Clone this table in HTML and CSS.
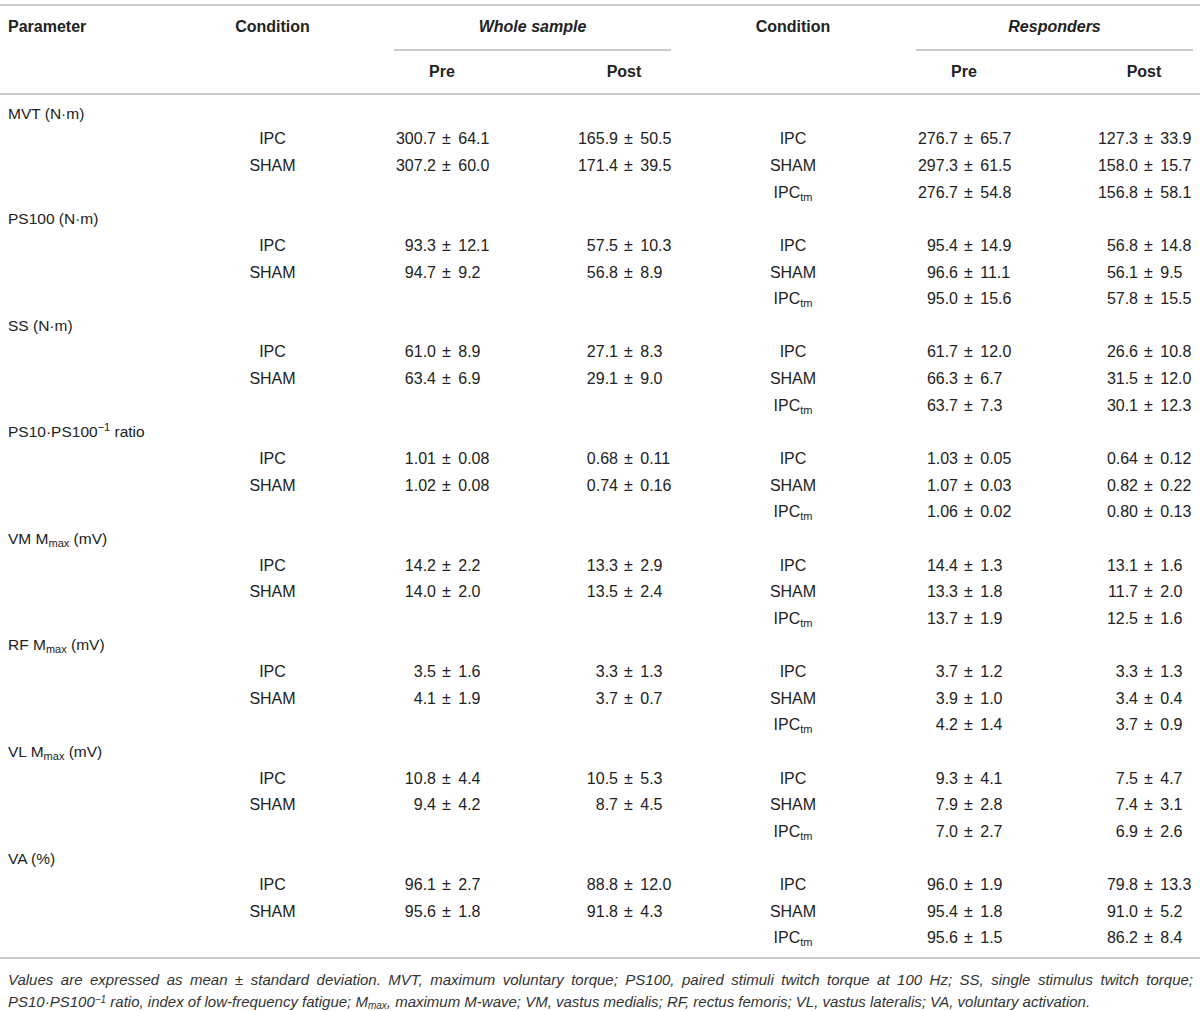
FILE: index.html
```html
<!DOCTYPE html>
<html lang="en">
<head>
  <meta charset="UTF-8" />
  <meta name="viewport" content="width=device-width, initial-scale=1.0" />
  <title>Table</title>
  <link rel="stylesheet" href="styles.css">
</head>
<body>
  <table class="data-table">
    <colgroup>
      <col class="c-param">
      <col class="c-cond">
      <col class="c-wpre">
      <col class="c-wpost">
      <col class="c-cond2">
      <col class="c-rpre">
      <col class="c-rpost">
    </colgroup>
    <thead>
      <tr class="head-1">
        <th class="param">Parameter</th>
        <th class="cond">Condition</th>
        <th colspan="2" class="span-w"><div class="spanner"><em>Whole sample</em></div></th>
        <th class="cond2">Condition</th>
        <th colspan="2" class="span-r"><div class="spanner"><em>Responders</em></div></th>
      </tr>
      <tr class="head-2">
        <th></th>
        <th></th>
        <th class="wpre"><span class="hd">Pre</span></th>
        <th class="wpost"><span class="hd">Post</span></th>
        <th></th>
        <th class="rpre"><span class="hd">Pre</span></th>
        <th class="rpost"><span class="hd">Post</span></th>
      </tr>
    </thead>
    <tbody>
      <tr class="group"><td class="param">MVT (N·m)</td><td colspan="6"></td></tr>
      <tr>
        <td></td><td class="cond">IPC</td>
        <td class="wpre"><span class="m">300.7</span><span class="s">± 64.1</span></td>
        <td class="wpost"><span class="m">165.9</span><span class="s">± 50.5</span></td>
        <td class="cond2">IPC</td>
        <td class="rpre"><span class="m">276.7</span><span class="s">± 65.7</span></td>
        <td class="rpost"><span class="m">127.3</span><span class="s">± 33.9</span></td>
      </tr>
      <tr>
        <td></td><td class="cond">SHAM</td>
        <td class="wpre"><span class="m">307.2</span><span class="s">± 60.0</span></td>
        <td class="wpost"><span class="m">171.4</span><span class="s">± 39.5</span></td>
        <td class="cond2">SHAM</td>
        <td class="rpre"><span class="m">297.3</span><span class="s">± 61.5</span></td>
        <td class="rpost"><span class="m">158.0</span><span class="s">± 15.7</span></td>
      </tr>
      <tr>
        <td></td><td></td><td></td><td></td>
        <td class="cond2">IPC<sub>tm</sub></td>
        <td class="rpre"><span class="m">276.7</span><span class="s">± 54.8</span></td>
        <td class="rpost"><span class="m">156.8</span><span class="s">± 58.1</span></td>
      </tr>

      <tr class="group"><td class="param">PS100 (N·m)</td><td colspan="6"></td></tr>
      <tr>
        <td></td><td class="cond">IPC</td>
        <td class="wpre"><span class="m">93.3</span><span class="s">± 12.1</span></td>
        <td class="wpost"><span class="m">57.5</span><span class="s">± 10.3</span></td>
        <td class="cond2">IPC</td>
        <td class="rpre"><span class="m">95.4</span><span class="s">± 14.9</span></td>
        <td class="rpost"><span class="m">56.8</span><span class="s">± 14.8</span></td>
      </tr>
      <tr>
        <td></td><td class="cond">SHAM</td>
        <td class="wpre"><span class="m">94.7</span><span class="s">± 9.2</span></td>
        <td class="wpost"><span class="m">56.8</span><span class="s">± 8.9</span></td>
        <td class="cond2">SHAM</td>
        <td class="rpre"><span class="m">96.6</span><span class="s">± 11.1</span></td>
        <td class="rpost"><span class="m">56.1</span><span class="s">± 9.5</span></td>
      </tr>
      <tr>
        <td></td><td></td><td></td><td></td>
        <td class="cond2">IPC<sub>tm</sub></td>
        <td class="rpre"><span class="m">95.0</span><span class="s">± 15.6</span></td>
        <td class="rpost"><span class="m">57.8</span><span class="s">± 15.5</span></td>
      </tr>

      <tr class="group"><td class="param">SS (N·m)</td><td colspan="6"></td></tr>
      <tr>
        <td></td><td class="cond">IPC</td>
        <td class="wpre"><span class="m">61.0</span><span class="s">± 8.9</span></td>
        <td class="wpost"><span class="m">27.1</span><span class="s">± 8.3</span></td>
        <td class="cond2">IPC</td>
        <td class="rpre"><span class="m">61.7</span><span class="s">± 12.0</span></td>
        <td class="rpost"><span class="m">26.6</span><span class="s">± 10.8</span></td>
      </tr>
      <tr>
        <td></td><td class="cond">SHAM</td>
        <td class="wpre"><span class="m">63.4</span><span class="s">± 6.9</span></td>
        <td class="wpost"><span class="m">29.1</span><span class="s">± 9.0</span></td>
        <td class="cond2">SHAM</td>
        <td class="rpre"><span class="m">66.3</span><span class="s">± 6.7</span></td>
        <td class="rpost"><span class="m">31.5</span><span class="s">± 12.0</span></td>
      </tr>
      <tr>
        <td></td><td></td><td></td><td></td>
        <td class="cond2">IPC<sub>tm</sub></td>
        <td class="rpre"><span class="m">63.7</span><span class="s">± 7.3</span></td>
        <td class="rpost"><span class="m">30.1</span><span class="s">± 12.3</span></td>
      </tr>

      <tr class="group"><td class="param" colspan="2">PS10·PS100<sup>−1</sup> ratio</td><td colspan="5"></td></tr>
      <tr>
        <td></td><td class="cond">IPC</td>
        <td class="wpre"><span class="m">1.01</span><span class="s">± 0.08</span></td>
        <td class="wpost"><span class="m">0.68</span><span class="s">± 0.11</span></td>
        <td class="cond2">IPC</td>
        <td class="rpre"><span class="m">1.03</span><span class="s">± 0.05</span></td>
        <td class="rpost"><span class="m">0.64</span><span class="s">± 0.12</span></td>
      </tr>
      <tr>
        <td></td><td class="cond">SHAM</td>
        <td class="wpre"><span class="m">1.02</span><span class="s">± 0.08</span></td>
        <td class="wpost"><span class="m">0.74</span><span class="s">± 0.16</span></td>
        <td class="cond2">SHAM</td>
        <td class="rpre"><span class="m">1.07</span><span class="s">± 0.03</span></td>
        <td class="rpost"><span class="m">0.82</span><span class="s">± 0.22</span></td>
      </tr>
      <tr>
        <td></td><td></td><td></td><td></td>
        <td class="cond2">IPC<sub>tm</sub></td>
        <td class="rpre"><span class="m">1.06</span><span class="s">± 0.02</span></td>
        <td class="rpost"><span class="m">0.80</span><span class="s">± 0.13</span></td>
      </tr>

      <tr class="group"><td class="param">VM M<sub>max</sub> (mV)</td><td colspan="6"></td></tr>
      <tr>
        <td></td><td class="cond">IPC</td>
        <td class="wpre"><span class="m">14.2</span><span class="s">± 2.2</span></td>
        <td class="wpost"><span class="m">13.3</span><span class="s">± 2.9</span></td>
        <td class="cond2">IPC</td>
        <td class="rpre"><span class="m">14.4</span><span class="s">± 1.3</span></td>
        <td class="rpost"><span class="m">13.1</span><span class="s">± 1.6</span></td>
      </tr>
      <tr>
        <td></td><td class="cond">SHAM</td>
        <td class="wpre"><span class="m">14.0</span><span class="s">± 2.0</span></td>
        <td class="wpost"><span class="m">13.5</span><span class="s">± 2.4</span></td>
        <td class="cond2">SHAM</td>
        <td class="rpre"><span class="m">13.3</span><span class="s">± 1.8</span></td>
        <td class="rpost"><span class="m">11.7</span><span class="s">± 2.0</span></td>
      </tr>
      <tr>
        <td></td><td></td><td></td><td></td>
        <td class="cond2">IPC<sub>tm</sub></td>
        <td class="rpre"><span class="m">13.7</span><span class="s">± 1.9</span></td>
        <td class="rpost"><span class="m">12.5</span><span class="s">± 1.6</span></td>
      </tr>

      <tr class="group"><td class="param">RF M<sub>max</sub> (mV)</td><td colspan="6"></td></tr>
      <tr>
        <td></td><td class="cond">IPC</td>
        <td class="wpre"><span class="m">3.5</span><span class="s">± 1.6</span></td>
        <td class="wpost"><span class="m">3.3</span><span class="s">± 1.3</span></td>
        <td class="cond2">IPC</td>
        <td class="rpre"><span class="m">3.7</span><span class="s">± 1.2</span></td>
        <td class="rpost"><span class="m">3.3</span><span class="s">± 1.3</span></td>
      </tr>
      <tr>
        <td></td><td class="cond">SHAM</td>
        <td class="wpre"><span class="m">4.1</span><span class="s">± 1.9</span></td>
        <td class="wpost"><span class="m">3.7</span><span class="s">± 0.7</span></td>
        <td class="cond2">SHAM</td>
        <td class="rpre"><span class="m">3.9</span><span class="s">± 1.0</span></td>
        <td class="rpost"><span class="m">3.4</span><span class="s">± 0.4</span></td>
      </tr>
      <tr>
        <td></td><td></td><td></td><td></td>
        <td class="cond2">IPC<sub>tm</sub></td>
        <td class="rpre"><span class="m">4.2</span><span class="s">± 1.4</span></td>
        <td class="rpost"><span class="m">3.7</span><span class="s">± 0.9</span></td>
      </tr>

      <tr class="group"><td class="param">VL M<sub>max</sub> (mV)</td><td colspan="6"></td></tr>
      <tr>
        <td></td><td class="cond">IPC</td>
        <td class="wpre"><span class="m">10.8</span><span class="s">± 4.4</span></td>
        <td class="wpost"><span class="m">10.5</span><span class="s">± 5.3</span></td>
        <td class="cond2">IPC</td>
        <td class="rpre"><span class="m">9.3</span><span class="s">± 4.1</span></td>
        <td class="rpost"><span class="m">7.5</span><span class="s">± 4.7</span></td>
      </tr>
      <tr>
        <td></td><td class="cond">SHAM</td>
        <td class="wpre"><span class="m">9.4</span><span class="s">± 4.2</span></td>
        <td class="wpost"><span class="m">8.7</span><span class="s">± 4.5</span></td>
        <td class="cond2">SHAM</td>
        <td class="rpre"><span class="m">7.9</span><span class="s">± 2.8</span></td>
        <td class="rpost"><span class="m">7.4</span><span class="s">± 3.1</span></td>
      </tr>
      <tr>
        <td></td><td></td><td></td><td></td>
        <td class="cond2">IPC<sub>tm</sub></td>
        <td class="rpre"><span class="m">7.0</span><span class="s">± 2.7</span></td>
        <td class="rpost"><span class="m">6.9</span><span class="s">± 2.6</span></td>
      </tr>

      <tr class="group"><td class="param">VA (%)</td><td colspan="6"></td></tr>
      <tr>
        <td></td><td class="cond">IPC</td>
        <td class="wpre"><span class="m">96.1</span><span class="s">± 2.7</span></td>
        <td class="wpost"><span class="m">88.8</span><span class="s">± 12.0</span></td>
        <td class="cond2">IPC</td>
        <td class="rpre"><span class="m">96.0</span><span class="s">± 1.9</span></td>
        <td class="rpost"><span class="m">79.8</span><span class="s">± 13.3</span></td>
      </tr>
      <tr>
        <td></td><td class="cond">SHAM</td>
        <td class="wpre"><span class="m">95.6</span><span class="s">± 1.8</span></td>
        <td class="wpost"><span class="m">91.8</span><span class="s">± 4.3</span></td>
        <td class="cond2">SHAM</td>
        <td class="rpre"><span class="m">95.4</span><span class="s">± 1.8</span></td>
        <td class="rpost"><span class="m">91.0</span><span class="s">± 5.2</span></td>
      </tr>
      <tr class="last">
        <td></td><td></td><td></td><td></td>
        <td class="cond2">IPC<sub>tm</sub></td>
        <td class="rpre"><span class="m">95.6</span><span class="s">± 1.5</span></td>
        <td class="rpost"><span class="m">86.2</span><span class="s">± 8.4</span></td>
      </tr>
    </tbody>
  </table>

  <div class="footnote">
    <span class="line first">Values are expressed as mean ± standard deviation. MVT, maximum voluntary torque; PS100, paired stimuli twitch torque at 100 Hz; SS, single stimulus twitch torque;</span>
    <span class="line">PS10·PS100<sup>−1</sup> ratio, index of low-frequency fatigue; M<sub>max</sub>, maximum M-wave; VM, vastus medialis; RF, rectus femoris; VL, vastus lateralis; VA, voluntary activation.</span>
  </div>
</body>
</html>
```

FILE: styles.css
```css
html, body {
  height: 100%;
}
body {
  margin: 0;
  background: #fff;
  color: #222;
  font-family: "Liberation Sans", Arial, Helvetica, sans-serif;
}
.data-table {
  width: 1200px;
  margin-top: 4px;
  border-collapse: collapse;
  table-layout: fixed;
  border-top: 2px solid #ccc;
  border-bottom: 2px solid #ccc;
}
.c-param { width: 200px; }
.c-cond { width: 145px; }
.c-wpre { width: 187px; }
.c-wpost { width: 139px; }
.c-cond2 { width: 229px; }
.c-rpre { width: 154px; }
.c-rpost { width: 146px; }

th {
  font-size: 16px;
  font-weight: bold;
  padding: 0;
  white-space: nowrap;
}
.head-1 th {
  height: 45px;
  vertical-align: top;
  padding-top: 12px;
  box-sizing: border-box;
}
.head-2 th {
  height: 42px;
  vertical-align: middle;
  border-bottom: 2px solid #ccc;
}
th.param {
  text-align: left;
  padding-left: 8px;
}
.spanner {
  border-bottom: 2px solid #ccc;
  padding-bottom: 13px;
  text-align: center;
}
.span-w .spanner {
  margin-left: 49px;
}
.span-r .spanner {
  margin-left: 16px;
  margin-right: 7px;
}
.hd {
  display: inline-block;
  width: 100px;
  text-align: center;
}

td {
  font-size: 16px;
  height: 26.65px;
  padding: 0;
  line-height: 20px;
  white-space: nowrap;
  vertical-align: middle;
}
td.param {
  font-size: 15.5px;
}
.param {
  text-align: left;
  padding-left: 8px;
}
.cond {
  text-align: center;
}
.cond2 {
  text-align: center;
  padding-left: 15px;
}
.wpre { padding-left: 47px; text-align: left; }
.wpost { padding-left: 42px; text-align: left; }
.rpre { padding-left: 14px; text-align: left; }
.rpost { padding-left: 40px; text-align: left; }

.m {
  display: inline-block;
  width: 44px;
  text-align: right;
}
.s {
  padding-left: 6px;
  word-spacing: 3px;
}
tbody tr:first-child td {
  height: 32px;
  padding-top: 6px;
  box-sizing: border-box;
}
tbody tr.last td {
  height: 33px;
  padding-bottom: 6px;
  box-sizing: border-box;
}
sub {
  font-size: 11px;
  line-height: 0;
  vertical-align: -3px;
}
sup {
  font-size: 11px;
  line-height: 0;
  vertical-align: 6px;
}
.footnote {
  margin-top: 10px;
  padding: 0 7px 0 8px;
  font-size: 15px;
  font-style: italic;
  line-height: 22px;
  color: #333;
}
.footnote .line {
  display: block;
  white-space: nowrap;
}
.footnote .first {
  text-align: justify;
  text-align-last: justify;
}
.footnote sup {
  font-size: 10px;
  vertical-align: 4px;
}
.footnote sub {
  font-size: 10px;
  vertical-align: -2px;
}
```
